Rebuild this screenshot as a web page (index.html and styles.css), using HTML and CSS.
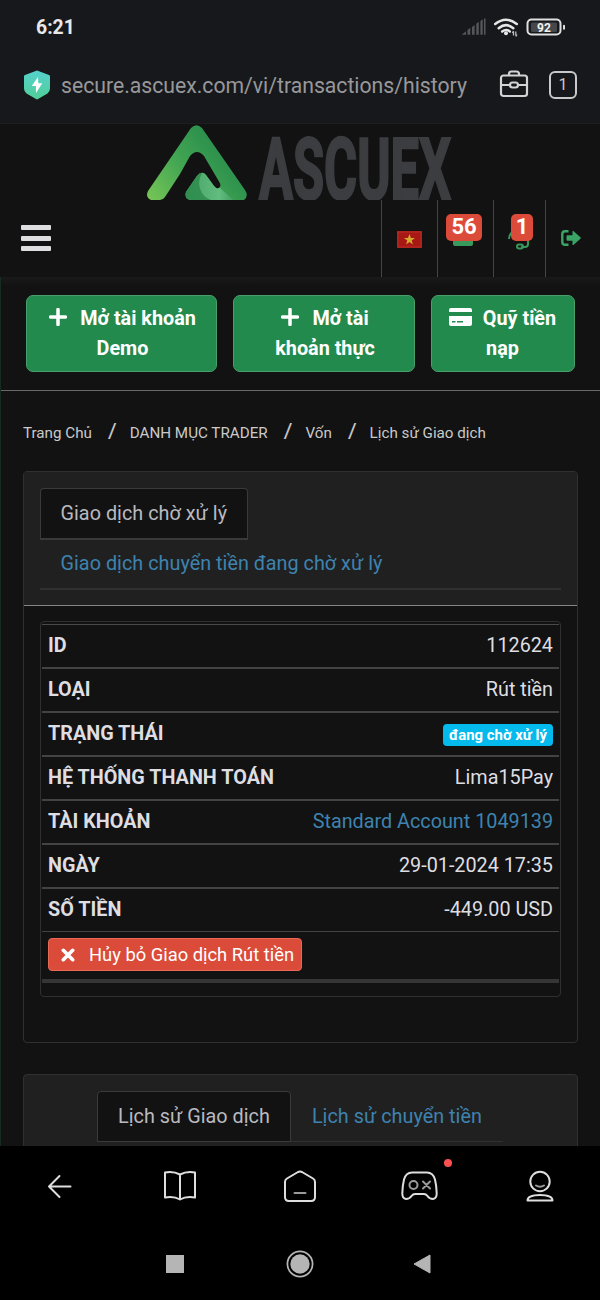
FILE: index.html
```html
<!DOCTYPE html>
<html lang="vi">
<head>
<meta charset="utf-8">
<title>Lịch sử Giao dịch</title>
<link rel="stylesheet" href="styles.css">
</head>
<body>
<div class="phone">
  <header class="chrome">
    <div class="status">
      <span class="clock">6:21</span>
      <svg class="status-icons" width="106" height="24" viewBox="0 0 106 24">
        <g fill="#55565a"><path d="M1 18.500l4-3.200v3.500H1zM6.500 14l2.800-2.200v7H6.500zM11 11l2.600-2v9.800H11zM15.300 7.700l2.500-2v13.100h-2.500zM19.400 5l2.300-1.700v15.500h-2.300z"/><rect x="23" y="2.500" width="1.500" height="16.300"/></g>
        <g fill="none" stroke="#e6e6e7" stroke-width="2.500" stroke-linecap="round"><path d="M34.200 8Q45-.6 55.800 8M37.700 12.200q7.300-6.200 14.600 0M41.200 15.600q3.800-3 7.600-.2"/></g>
        <circle cx="45" cy="17.300" r="2" fill="#e6e6e7"/>
        <path d="M52.500 15.500v4M52.500 15l-1.200 2M54.800 15.500v4M54.800 20.500l1.200-2" stroke="#bbb" stroke-width="1.300"/>
        <rect x="66.500" y="3.500" width="33" height="15" rx="4" fill="none" stroke="#dfdfe0" stroke-width="2"/>
        <rect x="70" y="6.500" width="26" height="9.500" rx="1.500" fill="#46474b"/>
        <rect x="102" y="8.700" width="2" height="5" rx="1" fill="#dfdfe0"/>
        <text class="battery" x="83" y="15.600" text-anchor="middle">92</text>
      </svg>
    </div>
    <div class="address">
      <svg class="shield" width="26" height="30" viewBox="0 0 26 30"><defs><linearGradient id="sh" x2="0" y2="1"><stop stop-color="#55d2cd"/><stop offset="1" stop-color="#50ce97"/></linearGradient></defs><path d="M13 .5l12 4.500q1 .4 1 1.500v12q0 3-2.500 5L14 29q-1 .8-2 0l-9.500-5.500Q0 21.500 0 18.500v-12Q0 5.400 1 5z" fill="url(#sh)"/><path d="M14 7L7.700 16h4.200L12 23l6.300-9.700h-4z" fill="#fff"/></svg>
      <span class="url">secure.ascuex.com/vi/transactions/history</span>
      <svg class="case" width="30" height="30" viewBox="0 0 30 30" fill="none" stroke="#d3d3d4" stroke-width="2.200"><path d="M10 5.500V4Q10 1.500 12.500 1.500h5Q20 1.500 20 4v1.500"/><rect x="2" y="5.500" width="26" height="20.500" rx="2.500"/><path d="M2 15h9M19 15h9"/><rect x="11" y="12.500" width="8" height="5" rx="2.500"/></svg>
      <span class="tabcount">1</span>
    </div>
  </header>

  <main class="page">
    <div class="brand">
      <svg width="306" height="76" viewBox="0 0 306 76">
        <defs><linearGradient id="lg" x1="0" y1="1" x2="1" y2=".4"><stop stop-color="#78c655"/><stop offset=".45" stop-color="#43a653"/><stop offset="1" stop-color="#23864a"/></linearGradient><linearGradient id="li"><stop stop-color="#43a463"/><stop offset=".7" stop-color="#63bc80"/><stop offset="1" stop-color="#3f9f60"/></linearGradient></defs>
        <path d="M44 4q5.500-5.500 11 0l43 62q4 6-1 10H44q-7-1-5-8l11-16q5-6 9-1l8 11q3 4 5.500 1.500 2-2-.5-6L57 32q-7-8-14 0L33 50 18 73q-2 3-5 3H4q-6-3-3-9z" fill="url(#lg)"/>
        <path d="M50 52q5-6 9-1l8 11q3 4 5.500 1.500 10 9 14 12.500H44q-7-1-5-8z" fill="url(#li)"/>
        <path d="M50 52q3-4 5-3-6 10 0 20 3 5 9 7H44q-7-1-5-8z" fill="#29874a" opacity=".75"/>
        <text class="wordmark" x="112" y="75" textLength="192" lengthAdjust="spacingAndGlyphs">ASCUEX</text>
      </svg>
    </div>
    <nav class="navbar">
      <span class="burger"><i></i><i></i><i></i></span>
      <span class="nav-cell flag-cell"><svg width="25" height="17" viewBox="0 0 25 17"><rect width="25" height="17" fill="#a81916"/><rect x="1" y="1" width="23" height="15" fill="none" stroke="#b92c25"/><path d="M12.500 3l1.400 4h4l-3.200 2.500 1.200 4-3.400-2.400-3.400 2.400 1.200-4L7 7h4z" fill="#d4aa2c"/></svg></span>
      <span class="nav-cell mail-cell"><svg width="20" height="16" viewBox="0 0 20 16"><rect width="20" height="16" rx="2" fill="#39985b"/></svg><b class="count count-mail">56</b></span>
      <span class="nav-cell help-cell"><svg width="22" height="22" viewBox="0 0 22 22" fill="none" stroke="#39985b" stroke-width="2"><path d="M1 11q0-8 10-9 9 1 9 9v5q0 3-3 3h-4"/><rect x="9" y="16.500" width="6" height="4" rx="2"/></svg><b class="count count-help">1</b></span>
      <span class="nav-cell exit-cell"><svg width="20" height="16" viewBox="0 0 20 16"><path d="M7.500 1.300H4Q1.300 1.300 1.300 4v8q0 2.700 2.700 2.700h3.500" fill="none" stroke="#3aa565" stroke-width="2.400"/><path d="M6.500 5.200h5V1.700q0-1.500 1.200-.5l6.700 6q.8.800 0 1.600l-6.700 6q-1.200 1-1.200-.5v-3.500h-5q-1 0-1-1V6.200q0-1 1-1z" fill="#3aa565"/></svg></span>
    </nav>
    <div class="content">
      <div class="actions">
        <a class="action a1"><svg width="18" height="18" viewBox="0 0 18 18"><path d="M9 1.500v15M1.500 9h15" stroke="#fff" stroke-width="3.500" stroke-linecap="round"/></svg>Mở tài khoản<br>Demo</a>
        <a class="action a2"><svg width="18" height="18" viewBox="0 0 18 18"><path d="M9 1.500v15M1.500 9h15" stroke="#fff" stroke-width="3.500" stroke-linecap="round"/></svg>Mở tài<br>khoản thực</a>
        <a class="action a3"><svg width="23" height="18" viewBox="0 0 23 18"><path d="M2 0h19q2 0 2 2v2H0V2q0-2 2-2zM0 8h23v8q0 2-2 2H2q-2 0-2-2z" fill="#fff"/><path d="M3 13.700h3.500M8 13.700h6" stroke="#238a4e" stroke-width="1.600"/></svg>Quỹ tiền<br>nạp</a>
      </div>
      <div class="crumbs"><span>Trang Chủ</span><i>/</i><span>DANH MỤC TRADER</span><i>/</i><span>Vốn</span><i>/</i><span>Lịch sử Giao dịch</span></div>

      <section class="card pending">
        <div class="card-head">
          <div class="tabs stacked">
            <a class="tab active">Giao dịch chờ xử lý</a>
            <a class="tab">Giao dịch chuyển tiền đang chờ xử lý</a>
          </div>
        </div>
        <div class="card-body">
          <div class="table">
            <div class="row"><b>ID</b><span>112624</span></div>
            <div class="row"><b>LOẠI</b><span>Rút tiền</span></div>
            <div class="row"><b>TRẠNG THÁI</b><em class="label">đang chờ xử lý</em></div>
            <div class="row"><b>HỆ THỐNG THANH TOÁN</b><span>Lima15Pay</span></div>
            <div class="row"><b>TÀI KHOẢN</b><span class="link">Standard Account 1049139</span></div>
            <div class="row"><b>NGÀY</b><span>29-01-2024 17:35</span></div>
            <div class="row last"><b>SỐ TIỀN</b><span>-449.00 USD</span></div>
            <div class="cancel-row"><a class="cancel"><svg width="14" height="14" viewBox="0 0 14 14"><path d="M2.300 2.300l9.400 9.400M11.700 2.300l-9.400 9.400" stroke="#fff" stroke-width="3.600" stroke-linecap="round"/></svg>Hủy bỏ Giao dịch Rút tiền</a></div>
          </div>
        </div>
      </section>

      <section class="card history">
        <div class="tabs inline">
          <a class="tab active">Lịch sử Giao dịch</a>
          <a class="tab">Lịch sử chuyển tiền</a>
        </div>
      </section>
    </div>
  </main>

  <footer class="bottom">
    <div class="toolbar">
      <span><svg width="36" height="36" viewBox="0 0 36 36"><path d="M28.500 18.500H7M17.500 8L7 18.500 17.500 29" /></svg></span>
      <span><svg width="36" height="36" viewBox="0 0 36 36"><path d="M18 6.500Q11 2.800 3 4.500v25q9-1.500 15 2 6-3.500 15-2v-25Q25 2.800 18 6.500zM18 6.500v25"/></svg></span>
      <span><svg width="36" height="36" viewBox="0 0 36 36"><path d="M16 4q2-1 4 0l11 6.500q2 1.200 2 3.500v15q0 4-4 4H7q-4 0-4-4V14q0-2.300 2-3.500z"/><path class="dim" d="M12.500 25h11"/></svg></span>
      <span class="games"><svg width="40" height="36" viewBox="0 0 40 36"><path d="M12 4.500h15q6 0 8 7 1.500 6 1.700 14 0 5-3.700 5.500-3.500 0-5.500-3-1.500-2-3.500-2h-9q-2 0-3.500 2-2 3-5.500 3-3.700-.5-3.700-5.500.2-8 1.700-14 2-7 8-7z"/><g class="dim"><circle cx="13.500" cy="17" r="4"/><path d="M23 13.500l7 7M30 13.500l-7 7"/></g></svg><i class="dot"></i></span>
      <span><svg width="36" height="36" viewBox="0 0 36 36"><circle cx="18" cy="13.500" r="9.700"/><path class="dim" d="M14 17.500q4 2.500 8 0"/><path d="M5.500 32.500q0-5.500 12.500-5.500t12.500 5.500z"/></svg></span>
    </div>
    <div class="system">
      <svg width="18" height="18" viewBox="0 0 18 18"><rect width="18" height="18" fill="#b5b5b5"/></svg>
      <svg width="28" height="28" viewBox="0 0 28 28"><circle cx="14" cy="14" r="12.600" fill="none" stroke="#b5b5b5" stroke-width="1.800"/><circle cx="14" cy="14" r="9.700" fill="#b5b5b5"/></svg>
      <svg width="18" height="20" viewBox="0 0 18 20"><path d="M1 10L17 1v18z" fill="#b5b5b5" stroke="#b5b5b5" stroke-linejoin="round"/></svg>
    </div>
  </footer>
</div>
</body>
</html>
```
FILE: styles.css
```css
* { box-sizing: border-box; }
body { margin: 0; background: #121212; font-family: Roboto, "Liberation Sans", sans-serif; }
svg { display: block; flex: none; }
.phone { width: 600px; height: 1300px; overflow: hidden; display: flex; flex-direction: column; font-size: 19.8px; color: #dedee2; }

/* browser chrome */
.chrome { height: 124px; background: #17181c; border-bottom: 1px solid #1d1e20; flex: none; }
.status { height: 56px; padding: 16px 33px 0 36px; display: flex; justify-content: space-between; }
.clock { font-size: 19.4px; font-weight: 700; line-height: 24px; color: #e8e8e9; }
.battery { font: 700 12px Roboto, sans-serif; fill: #f2f2f2; }
.address { height: 58px; display: flex; align-items: center; padding: 0 23px 0 24px; }
.url { margin-left: 11px; width: 426px; font-size: 21.2px; color: #98989a; white-space: nowrap; }
.case { margin-left: 13px; }
.tabcount { width: 28px; height: 28px; margin-left: 20px; border: 2px solid #c9c9ca; border-radius: 6px; font-size: 16px; line-height: 24px; text-align: center; color: #c9c9ca; }
.tabcount { margin-top: -1px; }

/* site header */
.page { height: 1022px; flex: none; overflow: hidden; background: #121212; }
.brand { height: 76px; padding-left: 147px; }
.wordmark { font: 700 86px Roboto, sans-serif; fill: #3b3d40; stroke: #3b3d40; stroke-width: 2.500px; }
.navbar { height: 77px; display: flex; justify-content: flex-end; }
.burger { width: 30px; margin: 25px auto 0 21px; display: flex; flex-direction: column; gap: 5.500px; }
.burger i { height: 5px; border-radius: 1px; background: #dedee0; }
.nav-cell { position: relative; border-left: 1px solid #454546; display: flex; align-items: center; justify-content: center; }
.flag-cell { width: 56px; }
.mail-cell { width: 56px; }
.help-cell { width: 52px; }
.exit-cell { width: 55px; padding-right: 5px; padding-bottom: 2px; }
.mail-cell svg { margin: 0 5px 2px 0; }
.help-cell svg { margin-left: -1px; margin-top: 1px; }
.flag-cell svg { margin-top: 2px; }
.count { position: absolute; top: 14px; height: 27px; border-radius: 5px; background: #dc4b39; color: #fff; font-size: 22px; line-height: 26px; text-align: center; }
.count-mail { left: 8px; width: 36px; }
.count-help { left: 17px; width: 22px; }
.content { border-left: 1px solid #182b20; }
.actions { height: 114px; padding: 18px 25px 0; display: flex; gap: 16px; border-bottom: 1px solid #69696a; background: linear-gradient(#1a1a1a, #121212 9px); }
.action { height: 77px; padding-top: 8px; border: 1px solid #499f6b; border-radius: 7px; background: #238a4e; color: #fff; font-size: 19.8px; font-weight: 700; line-height: 30px; text-align: center; white-space: nowrap; }
.action svg { display: inline-block; margin-right: 13px; vertical-align: -1px; }
.action.a3 svg { margin-right: 11px; }
.a1 { width: 191px; padding-left: 2px; }
.a2 { width: 182px; padding-left: 2px; }
.a3 { width: 144px; }
.a3 { padding-right: 1px; }

.crumbs { height: 80px; padding: 24px 0 0 22px; display: flex; font-size: 15.200px; line-height: 36px; color: #cacaca; white-space: nowrap; }
.crumbs i { font-style: normal; font-size: 21px; width: 37.800px; line-height: 32px; text-align: center; -webkit-text-stroke: .2px #cacaca; padding-left: 3px; }

/* cards */
.card { margin-left: 22px; width: 555px; border: 1px solid #303031; border-radius: 4px; }
.pending { height: 572px; }
.card-head { height: 134px; padding: 16px 16px 0; background: #202020; border-bottom: 1px solid #858585; border-radius: 3px 3px 0 0; }
.tabs { border-bottom: 2px solid #303031; color: #b9bac0; line-height: 50px; }
.stacked { height: 102px; display: flex; flex-direction: column; align-items: flex-start; }
.tab { height: 50px; padding: 0 20px 0 21px; color: #3e83af; white-space: nowrap; }
.tab.active { height: 52px; flex: none; padding: 0 20px; border: 1px solid #3a3a3b; border-bottom-width: 2px; border-radius: 4px 4px 0 0; background: #121212; color: #b9bac0; }
.stacked .tab { padding-left: 20.500px; letter-spacing: .03px; }
.stacked .tab.active { padding-left: 19.500px; }
.stacked .tab:last-child { height: 48px; line-height: 47px; }
.card-body { padding: 15px 16px 0; }
.table { height: 376px; padding: 2px 1px 0; border: 1px solid #303031; border-radius: 4px; }
.row { height: 44px; padding: 0 6px 1px; display: flex; align-items: center; justify-content: space-between; border-bottom: 2px solid #434344; color: #dedee2; }
.row:first-child { border-top: 1px solid #4a4a4b; height: 45px; }
.row.last { border-bottom: 1px solid #434344; height: 43px; padding-bottom: 2px; }
.row .link { color: #3e83af; }
.label { height: 22px; margin-top: 3px; padding: 0 6px; border-radius: 4px; background: #04b9ec; color: #fff; font-style: normal; font-weight: 700; font-size: 14.900px; line-height: 22px; }
.cancel-row { height: 51px; padding: 6px 6px 0; border-bottom: 4px solid #353536; }
.cancel { display: flex; align-items: center; width: 254px; height: 33px; padding-left: 12px; gap: 14px; border: 1px solid #e96957; border-radius: 4px; background: #db4b39; color: #fff; font-size: 18.350px; white-space: nowrap; }
.history { margin-top: 31px; height: 90px; padding: 16px 73px 0; background: #202020; }
.inline { height: 51px; display: flex; margin-right: 1px; border-bottom-width: 1px; }
.inline .tab { line-height: 51px; letter-spacing: .03px; }
.inline .tab.active { height: 51px; line-height: 49px; border-bottom-width: 1px; }

/* bottom bars */
.bottom { height: 154px; background: #000; flex: none; }
.toolbar { height: 80px; display: grid; grid-template-columns: repeat(5, 120px); justify-items: center; align-items: center; }
.toolbar svg { fill: none; stroke: #dedede; stroke-width: 2; stroke-linecap: round; stroke-linejoin: round; }
.toolbar .dim { stroke: #9a9a9a; }
.games { position: relative; }
.dot { position: absolute; width: 8px; height: 8px; left: 44px; top: -9px; border-radius: 50%; background: #fa5052; }
.system { height: 74px; padding: 2px 0 0 166px; display: flex; align-items: center; }
.system svg:nth-child(2) { margin-left: 102px; }
.system svg:nth-child(3) { margin-left: 99px; }
```
